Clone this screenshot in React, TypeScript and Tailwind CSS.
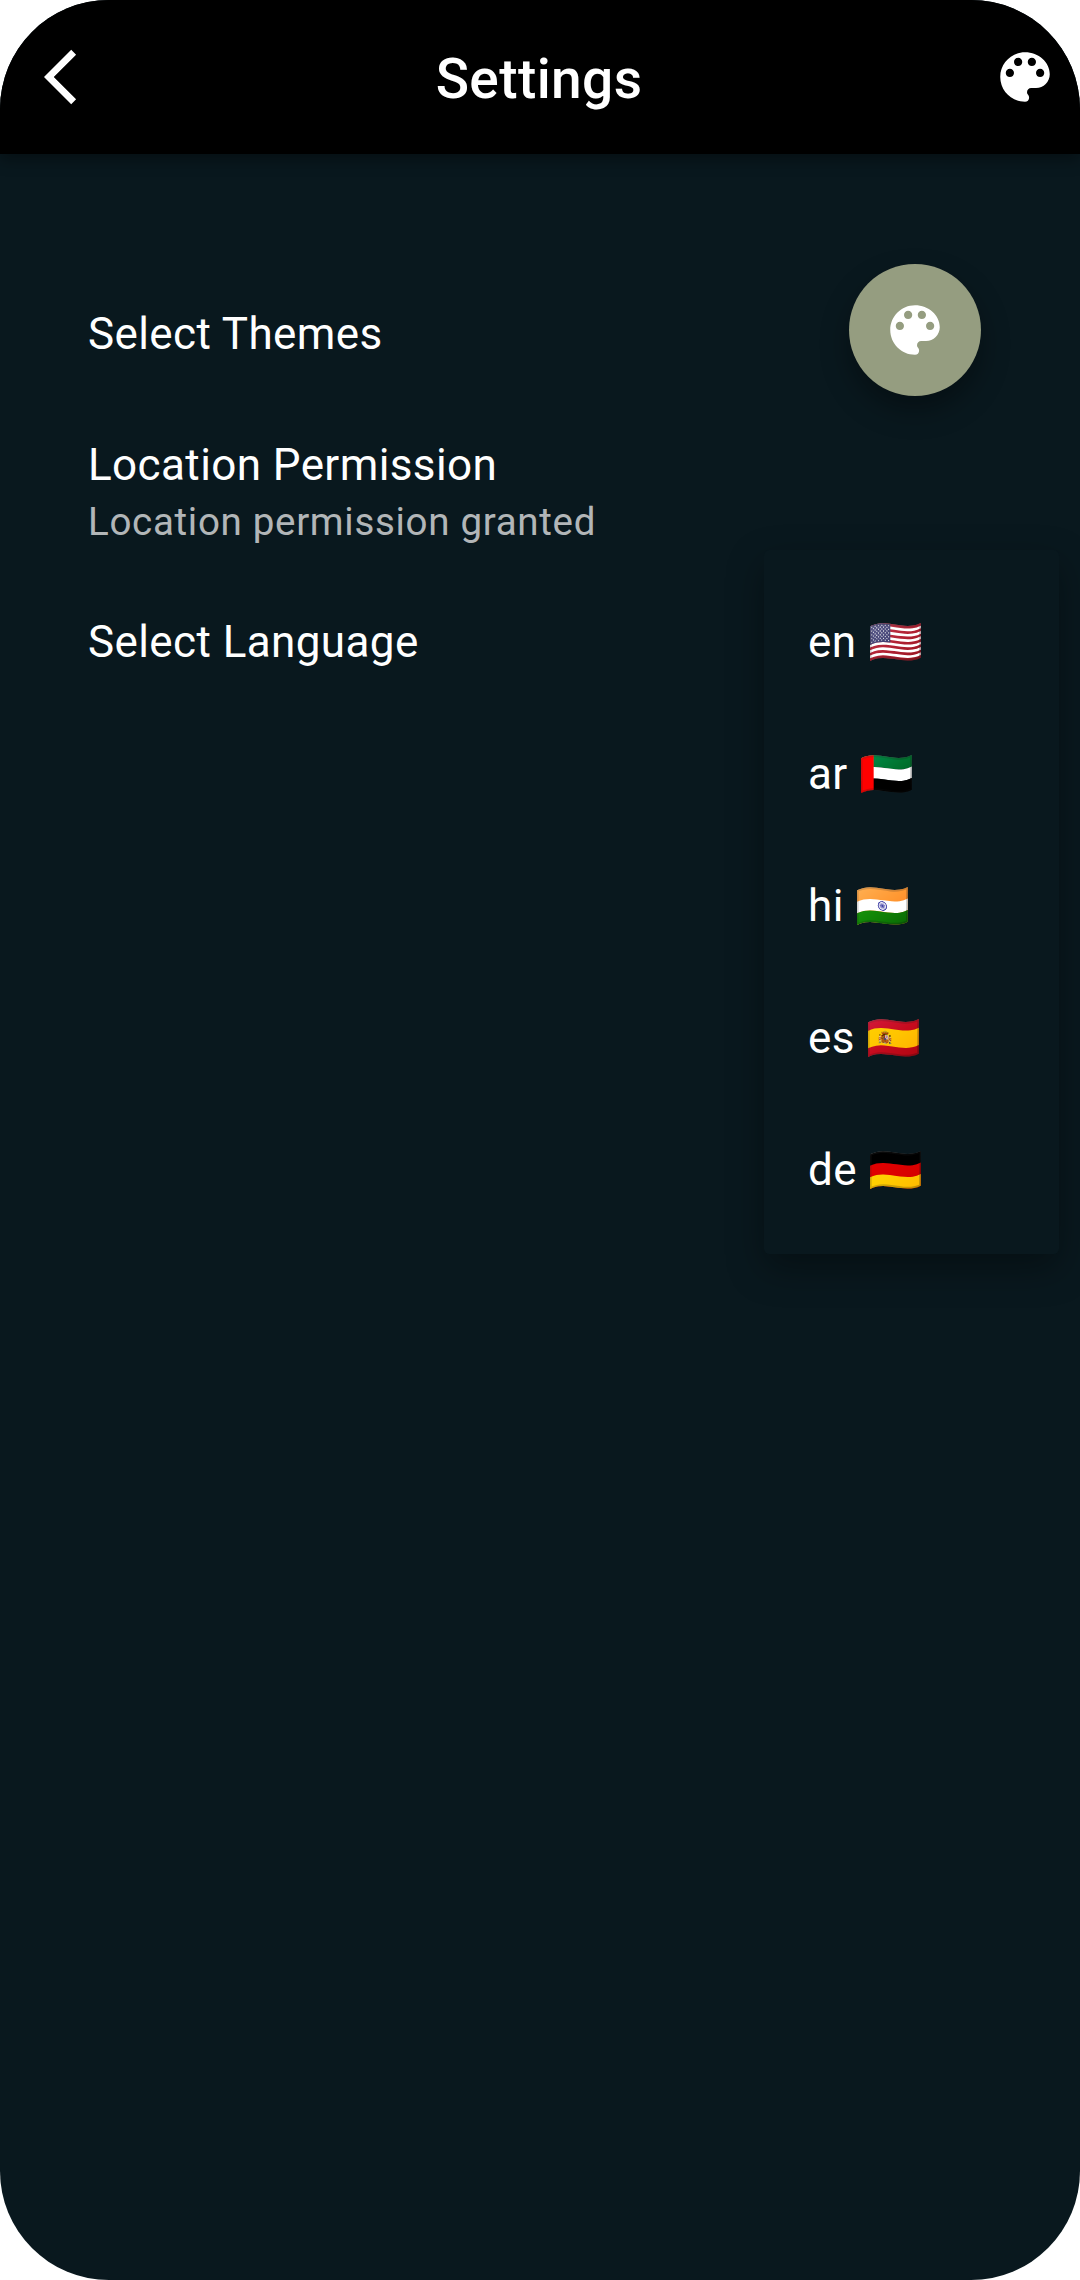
const PALETTE =
  "M12 3c-4.97 0-9 4.03-9 9s4.03 9 9 9c.83 0 1.5-.67 1.5-1.5 0-.39-.15-.74-.39-1.01-.23-.26-.38-.61-.38-.99 0-.83.67-1.5 1.5-1.5H16c2.76 0 5-2.24 5-5 0-4.42-4.03-8-9-8zm-5.5 9c-.83 0-1.5-.67-1.5-1.5S5.67 9 6.5 9 8 9.67 8 10.500 7.330 12 6.500 12zm3-4C8.670 8 8 7.330 8 6.500S8.670 5 9.500 5s1.500.670 1.500 1.500S10.330 8 9.500 8zm5 0c-.83 0-1.500-.67-1.500-1.500S13.670 5 14.500 5s1.500.67 1.500 1.500S15.330 8 14.500 8zm3 4c-.83 0-1.500-.67-1.500-1.500S16.670 9 17.500 9s1.500.67 1.500 1.500-.67 1.500-1.500 1.500z";

function Palette() {
  return (
    <svg viewBox="0 0 24 24" className="size-[66px] fill-white">
      <path d={PALETTE} />
    </svg>
  );
}

const LANGUAGES = [
  { code: "en", flag: "🇺🇸" },
  { code: "ar", flag: "🇦🇪" },
  { code: "hi", flag: "🇮🇳" },
  { code: "es", flag: "🇪🇸" },
  { code: "de", flag: "🇩🇪" },
];

export default function App() {
  return (
    <div className="h-[2280px] w-[1080px] bg-white">
      <div className="relative flex h-full flex-col overflow-hidden rounded-[109px] bg-[#09181e] font-['Roboto',sans-serif] text-[44px] leading-[66px] tracking-[0.4px] text-white">
        <header className="flex h-[154px] shrink-0 items-center justify-between bg-black pr-[22px] pl-11 shadow-[0_6px_14px_rgba(0,0,0,0.35)]">
          <svg viewBox="0 0 24 24" className="size-[66px] fill-white">
            <path d="M11.67 3.87L9.9 2.1 0 12l9.9 9.9 1.77-1.77L3.54 12z" />
          </svg>
          <h1 className="mr-6 pt-[3px] text-[55px] font-medium">Settings</h1>
          <Palette />
        </header>
        <main className="flex flex-col px-[88px] pt-[110px]">
          <div className="flex h-[132px] items-center justify-between">
            <span className="pt-2">Select Themes</span>
            <button className="mr-[11px] flex size-[132px] items-center justify-center rounded-full bg-[#959d80] shadow-[0_14px_28px_rgba(0,0,0,0.35)]">
              <Palette />
            </button>
          </div>
          <div className="mt-9 flex flex-col">
            <span>Location Permission</span>
            <span className="text-[38.5px] leading-[47px] tracking-[0.69px] text-white/70">Location permission granted</span>
          </div>
          <span className="mt-16">Select Language</span>
        </main>
        <div className="absolute top-[550px] left-[764px] flex h-[704px] w-[295px] flex-col rounded-[5.5px] bg-[#09181e] py-[22px] shadow-[0_14px_36px_rgba(0,0,0,0.36)]">
          {LANGUAGES.map((l) => (
            <div key={l.code} className="flex h-[132px] items-center gap-[11.4px] pt-[7px] pl-11">
              <span>{l.code}</span>
              <span>{l.flag}</span>
            </div>
          ))}
        </div>
      </div>
    </div>
  );
}
